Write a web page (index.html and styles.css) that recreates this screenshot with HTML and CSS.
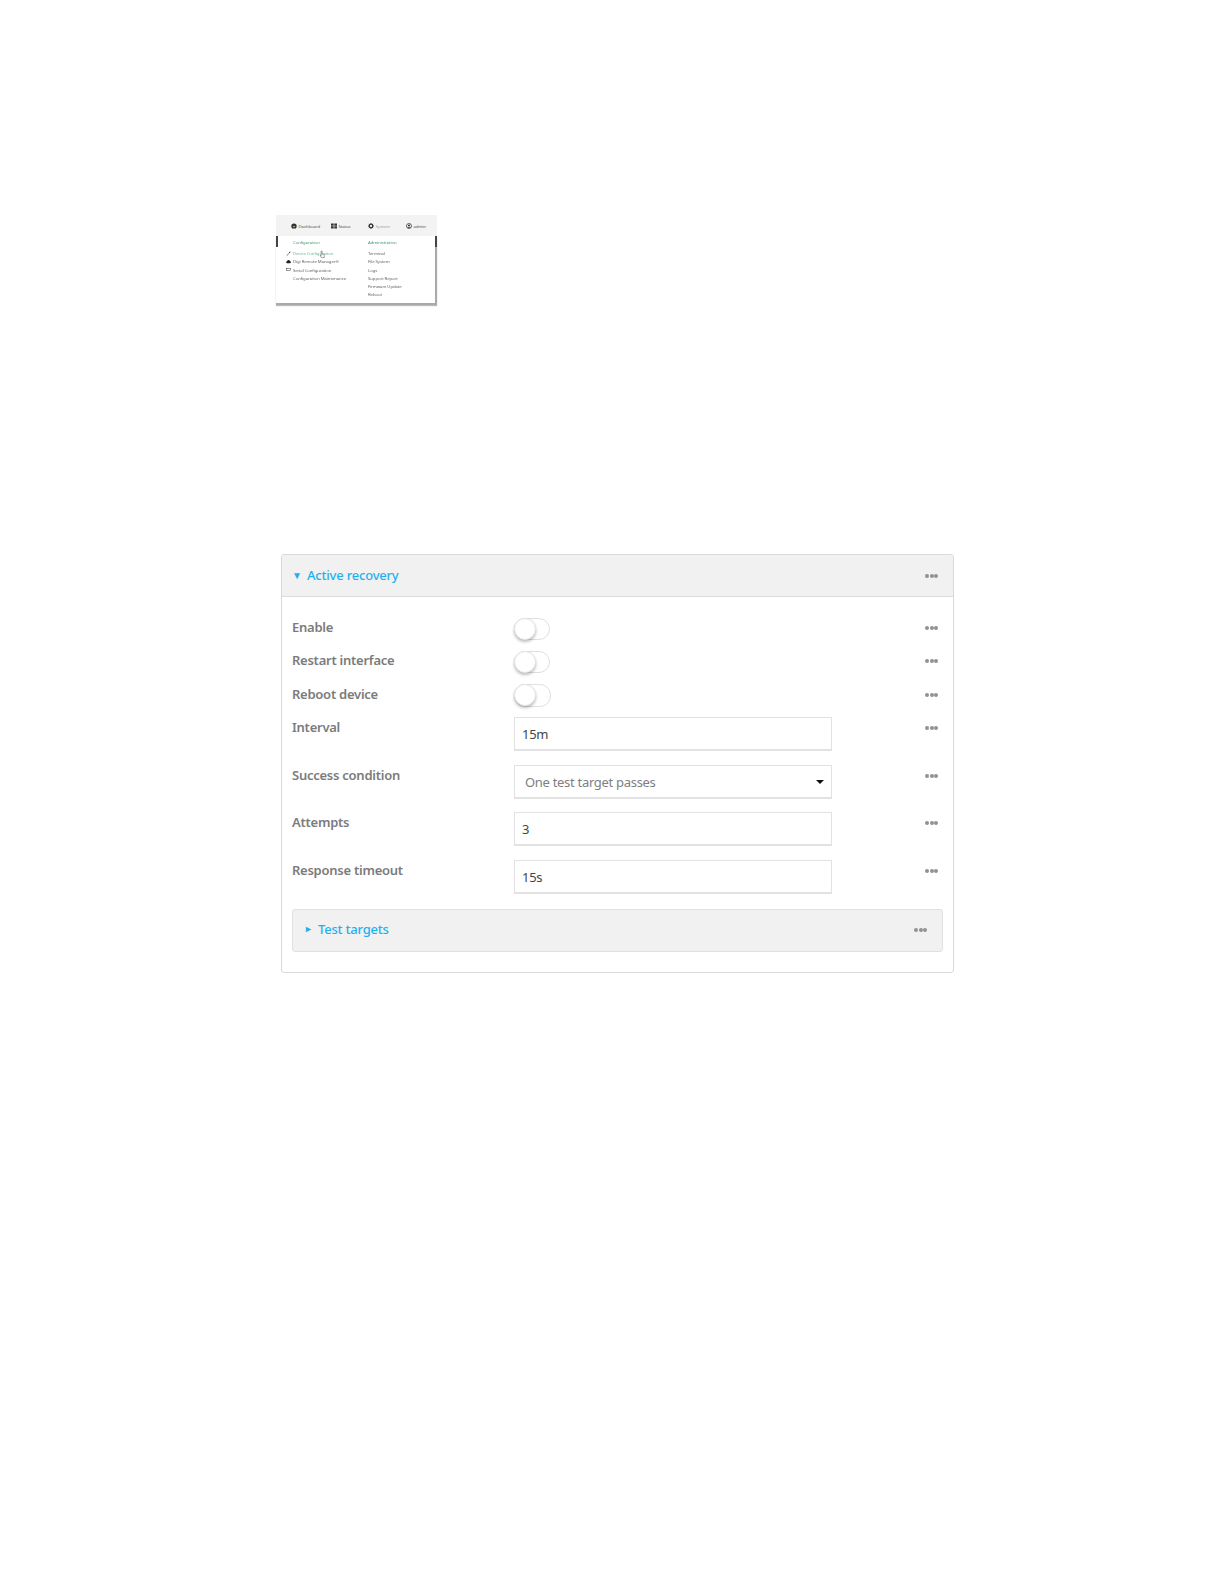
FILE: index.html
```html
<!DOCTYPE html>
<html lang="en">
<head>
<meta charset="utf-8">
<title>Active recovery</title>
<link rel="stylesheet" href="styles.css">
</head>
<body>
<main class="page">
  <section class="shot">
    <nav class="shot-nav">
      <span class="shot-link shot-dash"><svg class="shot-ico" viewBox="0 0 10 10"><path d="M5 1a4.5 4.5 0 0 0-4.5 4.5c0 1.4.6 2.6 1.5 3.5h6c.9-.9 1.5-2.100 1.500-3.500A4.500 4.500 0 0 0 5 1z" fill="#333"/><circle cx="5" cy="6" r="1.200" fill="#fff"/></svg>Dashboard</span>
      <span class="shot-link shot-status"><svg class="shot-ico" viewBox="0 0 10 10"><path d="M0 1h4.500v3.500H0zM5.500 1H10v3.500H5.500zM0 5.500h4.500V9H0zM5.500 5.500H10V9H5.500z" fill="#333"/></svg>Status</span>
      <span class="shot-link shot-system"><svg class="shot-ico" viewBox="0 0 10 10"><circle cx="5" cy="5" r="3" fill="none" stroke="#333" stroke-width="2.200"/><path d="M5 0v2M5 8v2M0 5h2M8 5h2M1.500 1.500l1.400 1.400M7.100 7.100l1.400 1.400M1.500 8.500l1.400-1.400M7.100 2.900l1.400-1.400" stroke="#333" stroke-width="1.200"/></svg><em>System</em></span>
      <span class="shot-link"><svg class="shot-ico" viewBox="0 0 10 10"><circle cx="5" cy="5" r="4.200" fill="none" stroke="#333" stroke-width="1.200"/><circle cx="5" cy="4" r="1.700" fill="#333"/><path d="M2 8c.6-1.700 5.400-1.700 6 0z" fill="#333"/></svg>admin</span>
    </nav>
    <div class="shot-menu">
      <ul class="shot-col shot-col-left">
        <li class="shot-head">Configuration</li>
        <li class="shot-active"><svg class="shot-item-ico" viewBox="0 0 10 10"><path d="M1 9l5-5 1-2.500L9 1 8.500 3 6 5 2 9.500z" fill="#333"/></svg>Device Configuration</li>
        <li><svg class="shot-item-ico" viewBox="0 0 10 10"><path d="M2.500 8.500a2 2 0 0 1-.3-4 3 3 0 0 1 5.700-.5 2.300 2.300 0 0 1 0 4.500z" fill="#222"/></svg>Digi Remote Manager®</li>
        <li><svg class="shot-item-ico" viewBox="0 0 10 10"><rect x="1" y="2.500" width="8" height="4" fill="none" stroke="#333"/></svg>Serial Configuration</li>
        <li>Configuration Maintenance</li>
      </ul>
      <ul class="shot-col">
        <li class="shot-head">Administration</li>
        <li>Terminal</li>
        <li>File System</li>
        <li>Logs</li>
        <li>Support Report</li>
        <li>Firmware Update</li>
        <li>Reboot</li>
      </ul>
      <svg class="shot-cursor" viewBox="0 0 8 10"><path d="M2.500 1v5.500L1.500 6 2.500 8.500h3.500V5L3.500 4.500V1z" fill="#fff" stroke="#555" stroke-width=".6"/></svg>
    </div>
  </section>

  <section class="card">
    <header class="card-head">
      <span class="title"><span class="caret">▼</span>Active recovery</span>
      <span class="dots"><i></i><i></i><i></i></span>
    </header>
    <div class="card-body">
      <div class="row row-toggle">
        <span class="label">Enable</span>
        <span class="toggle"><i></i></span>
        <span class="dots"><i></i><i></i><i></i></span>
      </div>
      <div class="row row-toggle">
        <span class="label">Restart interface</span>
        <span class="toggle"><i></i></span>
        <span class="dots"><i></i><i></i><i></i></span>
      </div>
      <div class="row row-toggle">
        <span class="label">Reboot device</span>
        <span class="toggle toggle-shift"><i></i></span>
        <span class="dots"><i></i><i></i><i></i></span>
      </div>
      <div class="row row-field">
        <span class="label">Interval</span>
        <span class="field">15m</span>
        <span class="dots"><i></i><i></i><i></i></span>
      </div>
      <div class="row row-field">
        <span class="label">Success condition</span>
        <span class="field field-select">One test target passes<b class="arrow"></b></span>
        <span class="dots"><i></i><i></i><i></i></span>
      </div>
      <div class="row row-field">
        <span class="label">Attempts</span>
        <span class="field">3</span>
        <span class="dots"><i></i><i></i><i></i></span>
      </div>
      <div class="row row-field">
        <span class="label">Response timeout</span>
        <span class="field">15s</span>
        <span class="dots"><i></i><i></i><i></i></span>
      </div>
      <div class="sub">
        <span class="title"><span class="caret caret-small">►</span>Test targets</span>
        <span class="dots"><i></i><i></i><i></i></span>
      </div>
    </div>
  </section>
</main>
</body>
</html>
```
FILE: styles.css
```css
* { box-sizing: border-box; }
html, body { margin: 0; background: #fff; }
body { font-family: "Noto Sans", "Open Sans", sans-serif; }
.page { width: 1224px; height: 1584px; padding: 215px 0 0 276px; }

/* mini screenshot */
.shot { width: 161px; height: 90px; display: flex; flex-direction: column; filter: blur(.45px); font-size: 4.300px; letter-spacing: -.09px; color: #666; }
.shot-nav { height: 21px; background: #f3f3f3; display: flex; align-items: center; padding-left: 15px; }
.shot-link { display: flex; align-items: center; gap: 1.500px; white-space: nowrap; color: #555; }
.shot-dash { width: 40px; }
.shot-status { width: 37px; }
.shot-system { width: 38px; }
.shot-system em { font-style: normal; color: #8aa; }
.shot-ico { width: 6px; height: 6px; flex: none; }
.shot-menu { position: relative; flex: 1; display: flex; background: #fff; border: solid #aaa; border-width: 0 2px 2px 0; box-shadow: 0 1px 1px #bbb; padding: 3px 0 0 17px; }
.shot-menu::before, .shot-menu::after { content: ""; position: absolute; top: 0; width: 2px; height: 11px; background: #444; }
.shot-menu::before { left: 0; }
.shot-menu::after { right: -2px; }
.shot-col { list-style: none; margin: 0; padding: 0; line-height: 8.300px; }
.shot-col-left { width: 75px; }
.shot-col li { position: relative; white-space: nowrap; }
.shot-col .shot-head { color: #3f9a73; height: 10px; line-height: 7px; }
.shot-col .shot-active { color: #6db894; }
.shot-item-ico { position: absolute; left: -7px; top: 1.500px; width: 5px; height: 5px; }
.shot-cursor { position: absolute; left: 43px; top: 14px; width: 7px; height: 9px; }

/* card */
.card { width: 673px; height: 419px; margin: 249px 0 0 5px; border: 1px solid #d9d9d9; border-radius: 3px; }
.card-head { height: 42px; background: #f1f1f1; border-bottom: 1px solid #dcdcdc; display: flex; align-items: center; justify-content: space-between; padding: 0 15px 0 10px; border-radius: 3px 3px 0 0; }
.title { display: flex; align-items: center; color: #1fb0ee; font-size: 13px; letter-spacing: -.2px; font-weight: 500; line-height: 18px; margin-top: -2px; }
.caret { width: 15px; font-size: 10px; }
.caret-small { width: 14px; font-size: 9px; }
.dots { display: flex; width: 13px; flex: none; justify-content: space-between; }
.dots i { width: 4px; height: 4px; border-radius: 50%; background: #929292; }
.card-body { padding: 20px 10px 0; }
.row { display: flex; color: #7b7b7b; font-size: 13px; letter-spacing: -.25px; font-weight: 600; padding-right: 5px; }
.row-toggle { height: 33.300px; align-items: flex-start; }
.label { width: 222px; flex: none; line-height: 23px; margin-top: -1px; }
.toggle { position: relative; display: block; width: 36px; height: 22px; margin-top: 1px; flex: none; border: 1px solid #e0e0e0; border-radius: 11px; background: #fff; }
.toggle-shift { width: 37px; height: 23px; margin-top: 0; }
.toggle i { position: absolute; left: -1px; top: -1px; width: 22px; height: 22px; border-radius: 50%; background: #fff; border: 1px solid #e4e4e4; box-shadow: 0 2px 3px rgba(0,0,0,.25); }
.row > .dots { margin-left: auto; margin-top: 9px; }
.row-field { height: 47.700px; }
.row-field > .dots { margin-top: 9px; }
.field { position: relative; display: block; width: 318px; height: 34px; flex: none; border: 1px solid #e2e2e2; border-bottom-width: 2px; padding: 0 7px; font-size: 13px; letter-spacing: -.3px; font-weight: 400; color: #444; line-height: 33px; background: #fff; }
.field-select { color: #808080; padding-left: 10px; }
.arrow { position: absolute; right: 7px; top: 14px; width: 0; height: 0; border: 4px solid transparent; border-top: 4px solid #111; border-bottom: 0; }
.sub { height: 43px; margin-top: 1px; background: #f1f1f1; border: 1px solid #e0e0e0; border-radius: 3px; display: flex; align-items: center; justify-content: space-between; padding: 0 15px 0 11px; }
```
